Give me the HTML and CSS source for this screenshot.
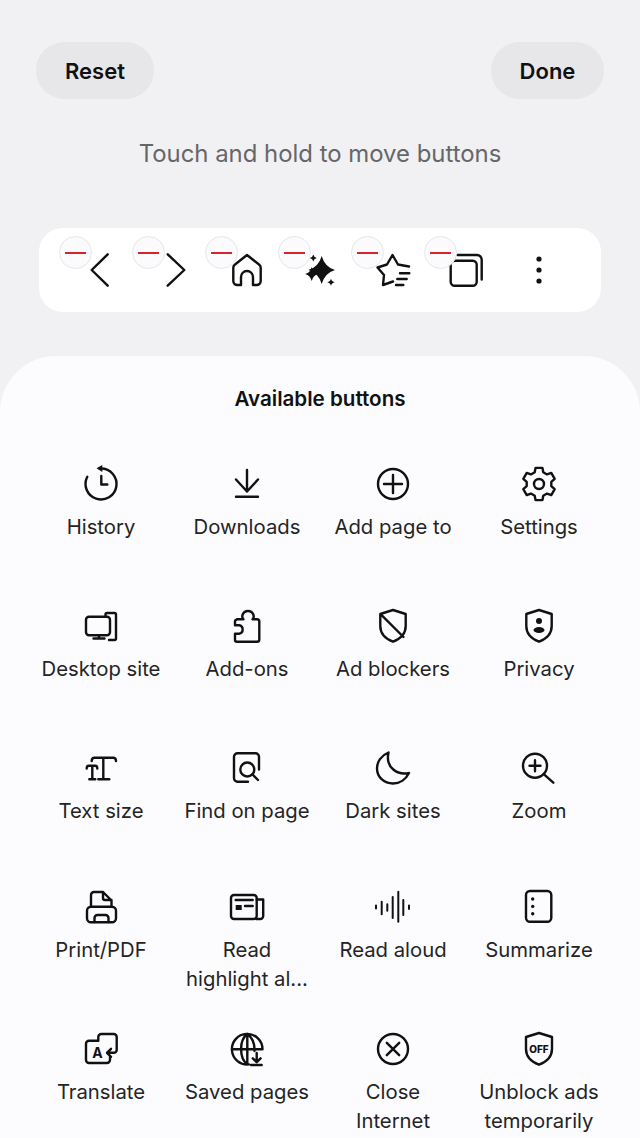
FILE: index.html
```html
<!DOCTYPE html>
<html lang="en">
  <head>
    <meta charset="UTF-8" />
    <meta name="viewport" content="width=device-width, initial-scale=1.0" />
    <title>Customize toolbar</title>
    <link rel="stylesheet" href="styles.css">
  </head>
  <body>
    <header class="top-bar">
      <button class="pill-btn reset-btn">Reset</button>
      <button class="pill-btn done-btn">Done</button>
    </header>

    <p class="hint">Touch and hold to move buttons</p>

    <!-- Current toolbar -->
    <nav class="toolbar">
      <div class="tool">
        <span class="remove"></span>
        <svg class="icon" viewBox="0 0 40 40"><path d="M26.700 4.300 10.700 20l16 15.700" /></svg>
      </div>
      <div class="tool">
        <span class="remove"></span>
        <svg class="icon" viewBox="0 0 40 40"><path d="M13.700 4.300 30.300 20 13.700 35.700" /></svg>
      </div>
      <div class="tool">
        <span class="remove"></span>
        <svg class="icon" viewBox="0 0 40 40"><path d="M20 5 8 14.500a4 4 0 0 0-1.700 3.300V31a4 4 0 0 0 4 4H14v-8a6 6 0 0 1 12 0v8h3.700a4 4 0 0 0 4-4V17.800a4 4 0 0 0-1.700-3.300Z" /></svg>
      </div>
      <div class="tool">
        <span class="remove"></span>
        <svg class="icon" viewBox="0 0 40 40">
          <path class="solid" d="M21.700 6Q24.800 17 35 20 24.800 23 21.700 34 18.600 23 8.400 20 18.600 17 21.700 6Z" />
          <path class="solid" d="M11.700 17Q13 22.700 18.200 24 13 25.300 11.700 31 10.400 25.300 5.200 24 10.400 22.700 11.700 17Z" />
          <path class="solid" d="M13.300 4.500Q13.900 7.400 16.800 8 13.900 8.600 13.300 11.500 12.700 8.600 9.800 8 12.700 7.400 13.300 4.500Z" />
          <path class="solid" d="M31 28.500Q31.600 31.700 34.800 32.300 31.600 32.900 31 36.100 30.400 32.900 27.200 32.300 30.400 31.700 31 28.500Z" />
        </svg>
      </div>
      <div class="tool">
        <span class="remove"></span>
        <svg class="icon" viewBox="0 0 40 40"><path d="M36 16.500 25 14.500 19.500 5 14 14.500 4.500 17.500 11 25 10 35l10-3.500M27 23.300h9.300M24.300 29h9.400M23 35h7.300" /></svg>
      </div>
      <div class="tool">
        <span class="remove"></span>
        <svg class="icon" viewBox="0 0 40 40">
          <rect x="4.700" y="10.700" width="26" height="25" rx="4" />
          <path d="M11.500 5H31a4.700 4.700 0 0 1 4.700 4.700v19.800" />
        </svg>
      </div>
      <div class="tool">
        <svg class="icon" viewBox="0 0 40 40">
          <circle class="solid" cx="20" cy="9" r="2.600" />
          <circle class="solid" cx="20" cy="20" r="2.600" />
          <circle class="solid" cx="20" cy="31" r="2.600" />
        </svg>
      </div>
    </nav>

    <section class="sheet">
      <h2 class="sheet-title">Available buttons</h2>
      <div class="button-grid">
        <div class="grid-item">
          <svg class="icon" viewBox="0 0 40 40">
            <path d="M20 4.500A15.500 15.500 0 1 1 6.300 12.800M20.300 12v8.500h6" />
            <path class="solid" d="M15.500 4.300 21.300 1v7Z" />
          </svg>
          <span class="label">History</span>
        </div>
        <div class="grid-item">
          <svg class="icon" viewBox="0 0 40 40"><path d="M20 6v21.500M9 15.500l11 12 11-12M9 32.700h22" /></svg>
          <span class="label">Downloads</span>
        </div>
        <div class="grid-item">
          <svg class="icon" viewBox="0 0 40 40">
            <circle cx="20" cy="20" r="15" />
            <path d="M20 11v18M11 20h18" />
          </svg>
          <span class="label">Add page to</span>
        </div>
        <div class="grid-item">
          <svg class="icon" viewBox="0 0 40 40">
            <polygon points="15.720,8.250 16.570,3.860 23.430,3.860 24.280,8.250 28.040,10.420 32.260,8.960 35.690,14.900 32.320,17.830 32.320,22.170 35.690,25.100 32.260,31.040 28.040,29.580 24.280,31.750 23.430,36.140 16.570,36.140 15.720,31.750 11.960,29.580 7.740,31.040 4.310,25.100 7.680,22.170 7.680,17.830 4.310,14.900 7.740,8.960 11.960,10.420" />
            <circle cx="20" cy="20" r="5" />
          </svg>
          <span class="label">Settings</span>
        </div>

        <div class="grid-item">
          <svg class="icon" viewBox="0 0 40 40">
            <rect x="5" y="10.700" width="24" height="18.500" rx="3" />
            <path d="M12.500 32.500h11M18 29.200v3.300M24.500 10V8.500a1.500 1.500 0 0 1 1.500-1.500h7.500a1.500 1.500 0 0 1 1.500 1.500v24a1.500 1.500 0 0 1-1.500 1.500H28" />
          </svg>
          <span class="label">Desktop site</span>
        </div>
        <div class="grid-item">
          <svg class="icon" viewBox="0 0 40 40"><path d="M10 13.300h6.500C15 12 15 10.800 15.500 9a5.800 5.800 0 0 1 11 0c.5 1.800.5 3-1 4.300H30a2.300 2.300 0 0 1 2.300 2.300v17.800a2.300 2.300 0 0 1-2.300 2.300H10a2 2 0 0 1-2-2v-5.900h4a4.300 4.300 0 0 0 0-8.500H8v-3.700a2 2 0 0 1 2-2Z" /></svg>
          <span class="label">Add-ons</span>
        </div>
        <div class="grid-item">
          <svg class="icon" viewBox="0 0 40 40"><path d="M20 4 32.700 8v12c0 8-5.700 13-12.700 15.700C13 33 7.300 28 7.300 20V8ZM7.600 8.200 30.500 31" /></svg>
          <span class="label">Ad blockers</span>
        </div>
        <div class="grid-item">
          <svg class="icon" viewBox="0 0 40 40">
            <path d="M20 4 32.700 8v12c0 8-5.700 13-12.700 15.700C13 33 7.300 28 7.300 20V8Z" />
            <circle class="solid" cx="20" cy="15" r="3" />
            <ellipse class="solid" cx="20" cy="24" rx="5.500" ry="3" />
          </svg>
          <span class="label">Privacy</span>
        </div>

        <div class="grid-item">
          <svg class="icon" viewBox="0 0 40 40"><path d="M10.700 13c0-2 1-3.300 2.800-3.300h18.700c1.800 0 2.800 1.300 2.800 3.300M22.300 9.700v21.600M17.300 31.300h11M5.700 20.500c0-1.800.7-2.800 2-2.800h6.600c1.300 0 2 1 2 2.800M11.300 17.700v13.600M8.300 31.300h6" /></svg>
          <span class="label">Text size</span>
        </div>
        <div class="grid-item">
          <svg class="icon" viewBox="0 0 40 40">
            <path d="M32 21.500V8.800a3.500 3.500 0 0 0-3.500-3.500h-18A3.500 3.500 0 0 0 7 8.800v21.400a3.500 3.500 0 0 0 3.500 3.500H21" />
            <circle cx="20.300" cy="21.500" r="7" />
            <path d="m25.500 26.500 5.500 5.500" />
          </svg>
          <span class="label">Find on page</span>
        </div>
        <div class="grid-item">
          <svg class="icon" viewBox="0 0 40 40"><path d="M15.500 4.500C8 7.500 4 14 4 20.500 4 29 11 35.500 20 35.500c7 0 13-4.500 16-10.500-11 2.500-24-5-20.500-20.500Z" /></svg>
          <span class="label">Dark sites</span>
        </div>
        <div class="grid-item">
          <svg class="icon" viewBox="0 0 40 40">
            <circle cx="16" cy="17.700" r="12" />
            <path d="M16 12.200v11M10.500 17.700h11M25 26.300l9.300 8.400" />
          </svg>
          <span class="label">Zoom</span>
        </div>

        <div class="grid-item">
          <svg class="icon" viewBox="0 0 40 40">
            <path d="M10 19.500V8a3 3 0 0 1 3-3h9l8.500 8.500v6M22 5v6a2 2 0 0 0 2 2h6.500" />
            <rect x="6" y="19.700" width="29" height="15.600" rx="4" />
            <path d="M13.500 35v-4a3 3 0 0 1 3-3h8a3 3 0 0 1 3 3v4" />
          </svg>
          <span class="label">Print/PDF</span>
        </div>
        <div class="grid-item">
          <svg class="icon" viewBox="0 0 40 40">
            <rect x="4" y="8" width="25.700" height="24" rx="3" />
            <path d="M29.700 12.500h6.500V29a3 3 0 0 1-3 3h-4M8.700 13h17M18 19h7.700" />
            <rect class="solid" x="8.700" y="18" width="6" height="5" />
          </svg>
          <span class="label">Read<br>highlight al...</span>
        </div>
        <div class="grid-item">
          <svg class="icon thin" viewBox="0 0 40 40"><path d="M3 18.500v3M8.700 14.700v12.600M14.300 17.300v6.400M19.700 10v21M25.300 4.700v30M30.300 13v15M36 18.500v3.500" /></svg>
          <span class="label">Read aloud</span>
        </div>
        <div class="grid-item">
          <svg class="icon" viewBox="0 0 40 40">
            <rect x="7" y="4" width="25.300" height="30.700" rx="4" />
            <circle class="solid" cx="13.700" cy="12" r="1.700" />
            <circle class="solid" cx="13.700" cy="19.400" r="1.700" />
            <circle class="solid" cx="13.700" cy="26.700" r="1.700" />
          </svg>
          <span class="label">Summarize</span>
        </div>

        <div class="grid-item">
          <svg class="icon" viewBox="0 0 40 40">
            <path d="M17.300 11.700H8a3 3 0 0 0-3 3V31a3 3 0 0 0 3 3h18a3 3 0 0 0 3-3v-3M17.300 11.700V8a3 3 0 0 1 3-3h12.400a3 3 0 0 1 3 3v12.500a3 3 0 0 1-3 3.300h-6.500M30 19.800l-4 4 4 4" />
            <text class="icon-text" x="16.500" y="28.500">A</text>
          </svg>
          <span class="label">Translate</span>
        </div>
        <div class="grid-item">
          <svg class="icon" viewBox="0 0 40 40">
            <path d="M35.500 20A15.300 15.300 0 1 0 22 35.400M5 20.300h30.500M20.300 5c-8.300 6-8.300 24 0 30.500M20.300 5c5.500 4 7.500 10 7.200 17M20.300 5v30.500" />
            <path d="M29.700 24v9M25.800 29.300l3.900 3.900 3.900-3.900M24 36h10.700" />
          </svg>
          <span class="label">Saved pages</span>
        </div>
        <div class="grid-item">
          <svg class="icon" viewBox="0 0 40 40">
            <circle cx="20" cy="20" r="15" />
            <path d="m13.800 13.800 12.400 12.400M26.200 13.800 13.800 26.200" />
          </svg>
          <span class="label">Close<br>Internet</span>
        </div>
        <div class="grid-item">
          <svg class="icon" viewBox="0 0 40 40">
            <path d="M20 4 33 8v12c0 8-6 13-13 15.700C13 33 7 28 7 20V8Z" />
            <text class="icon-text off" x="20" y="23.500">OFF</text>
          </svg>
          <span class="label">Unblock ads<br>temporarily</span>
        </div>
      </div>
    </section>
  </body>
</html>
```

FILE: styles.css
```css
/* General styling */
body {
  font-family: Inter, "Noto Sans", sans-serif;
  margin: 0;
  height: 1138px;
  overflow: hidden;
  background-color: #f1f1f3;
  color: #1a1a1a;
}

.top-bar {
  display: flex;
  justify-content: space-between;
  padding: 42px 36px 0;
}

.pill-btn {
  height: 57px;
  border: none;
  border-radius: 29px;
  background: #e7e7e9;
  color: #111;
  font-family: inherit;
  font-size: 22px;
  font-weight: 580;
}

.reset-btn {
  width: 118px;
}

.done-btn {
  width: 113px;
}

.hint {
  margin: 38px 0 0;
  line-height: 34px;
  text-align: center;
  font-size: 23.900px;
  color: #666668;
}

.toolbar {
  display: flex;
  justify-content: center;
  align-items: center;
  height: 84px;
  margin: 57px 39px 0;
  background: #fff;
  border-radius: 24px;
}

.tool {
  position: relative;
  display: flex;
  justify-content: center;
  width: 73px;
}

/* minus badge sits over the top left of the icon */
.remove {
  position: absolute;
  top: -14px;
  left: -6px;
  width: 33px;
  height: 33px;
  box-sizing: border-box;
  border: 1px solid #e6e6e8;
  border-radius: 50%;
  background: #fbfbfd;
  z-index: 1;
}

.remove::after {
  content: "";
  position: absolute;
  top: 15px;
  left: 5px;
  width: 21px;
  height: 2px;
  background: #d8222c;
}

.icon {
  display: block;
  width: 40px;
  height: 40px;
  fill: none;
  stroke: #111;
  stroke-width: 2.400;
  stroke-linecap: round;
  stroke-linejoin: round;
}

.icon.thin {
  stroke-width: 2;
}

.icon .solid {
  fill: #111;
  stroke: none;
}

.icon-text {
  fill: #111;
  stroke: none;
  font-family: Inter, sans-serif;
  font-size: 14px;
  font-weight: 700;
  text-anchor: middle;
}

.icon-text.off {
  font-size: 10px;
  font-weight: 800;
}

.sheet {
  margin-top: 44px;
  height: 782px;
  padding-top: 29px;
  box-sizing: border-box;
  background: #fcfcff;
  border-radius: 56px 56px 0 0;
}

.sheet-title {
  margin: 0 0 51px;
  line-height: 28px;
  text-align: center;
  font-size: 20.600px;
  font-weight: 580;
  color: #111;
}

.button-grid {
  display: grid;
  grid-template-columns: repeat(4, 146px);
  grid-template-rows: 142px 142px 139px 142px 1fr;
  justify-content: center;
}

.grid-item {
  display: flex;
  flex-direction: column;
  align-items: center;
}

.label {
  margin-top: 8px;
  line-height: 29px;
  text-align: center;
  font-size: 20.300px;
  color: #242424;
  white-space: nowrap;
}
```
